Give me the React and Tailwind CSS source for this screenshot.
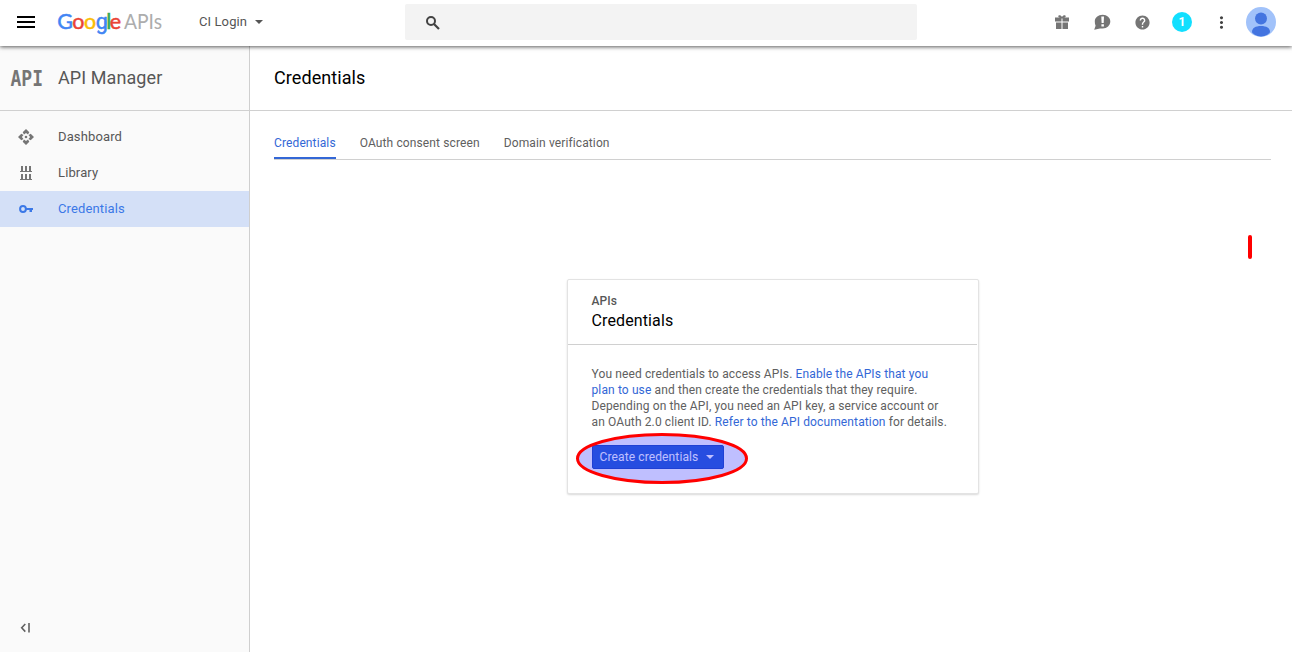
import React from "react";
import { MdHelp, MdMoreVert } from "react-icons/md";

function MenuIcon() {
  return (
    <svg width="18" height="12" viewBox="0 0 18 12" fill="#000">
      <path d="M0 0h18v2H0zM0 5h18v2H0zM0 10h18v2H0z" />
    </svg>
  );
}

function Logo() {
  return (
    <svg width="106" height="30" viewBox="0 0 106 30" className="overflow-visible font-['Lato',sans-serif]">
      <text y="22" fontSize="21.5" strokeWidth="0.5">
        <tspan x="-0.7" fill="#4285f4" stroke="#4285f4">G</tspan>
        <tspan x="14.3" fill="#ea4335" stroke="#ea4335">o</tspan>
        <tspan x="26" fill="#fbbc05" stroke="#fbbc05">o</tspan>
        <tspan x="37.7" fill="#4285f4" stroke="#4285f4" className="font-['Roboto',sans-serif]">g</tspan>
        <tspan x="48.3" fill="#34a853" stroke="#34a853">l</tspan>
        <tspan x="51.7" fill="#ea4335" stroke="#ea4335">e</tspan>
      </text>
      <text x="66" y="22" fontSize="20.500" fill="#adadad" textLength="38" lengthAdjust="spacingAndGlyphs">
        APIs
      </text>
    </svg>
  );
}

function SearchIcon() {
  return (
    <svg width="14" height="14" viewBox="0 0 14 14" fill="none" stroke="#424242">
      <circle cx="5" cy="5" r="4" strokeWidth="2" />
      <path d="M8 8l5 5" strokeWidth="2.200" />
    </svg>
  );
}

function Caret({ className }) {
  return (
    <svg width="8" height="4" viewBox="0 0 8 4" className={className} fill="currentColor">
      <path d="M0 0h8L4 4z" />
    </svg>
  );
}

function GiftIcon() {
  return (
    <svg width="14" height="14" viewBox="0 0 14 14" fill="#757575">
      <path d="M0 2.500h14v4H7.500v-3h-1v3H0zM1 7.500h5.500V14H1zM7.500 7.500H13V14H7.500z" />
      <path d="M7 3C5.500 3 3.300 2.500 3.300 1.400 3.300 0 5.800-.2 7 2 8.200-.2 10.700 0 10.700 1.400 10.700 2.500 8.500 3 7 3z" />
    </svg>
  );
}

function FeedbackIcon() {
  return (
    <svg width="17" height="16" viewBox="0 0 17 16">
      <path d="M8.700.8C13 .8 16.300 3.800 16.300 7.500s-3.300 7-7.600 7H6L.2 15.800l1.400-4C1 10.500.8 9 .8 7.500.8 3.800 4 .8 8.700.8z" fill="#757575" />
      <path d="M7.300 2.500h2.700L9.700 9H7.600zM7.400 10.300h2.500v2.200H7.400z" fill="#fff" />
    </svg>
  );
}

function Avatar() {
  return (
    <svg width="30" height="30" viewBox="0 0 30 30">
      <circle cx="15" cy="15" r="15" fill="#a1c2fa" />
      <circle cx="15" cy="11.500" r="6" fill="#4374e0" />
      <path d="M6 25c0-4 3.500-6 9-6s9 2 9 6c0 1-4 4.500-9 4.500S6 26 6 25z" fill="#4374e0" />
    </svg>
  );
}

function DashboardIcon() {
  return (
    <svg width="16" height="16" viewBox="0 0 16 16" fill="#757575">
      <path d="M8 0l3.300 3.300-1.300 2.200L8 3.900 6 5.500 4.700 3.300zM8 16l3.300-3.300-1.300-2.200-2 1.600-2-1.600-1.300 2.200zM0 8l3.300-3.300L5.500 6 3.900 8l1.600 2-2.200 1.300zM16 8l-3.300-3.300L10.500 6l1.600 2-1.600 2 2.200 1.300z" />
      <circle cx="8" cy="8" r="1.300" />
    </svg>
  );
}

function LibraryIcon() {
  return (
    <svg width="12" height="14" viewBox="0 0 12 14" fill="#757575">
      <path d="M1 0h2v5h2V0h2v5h2V0h2v5h1v1H0V5h1zM1 8h2v5h2V8h2v5h2V8h2v5h1v1H0v-1h1z" />
    </svg>
  );
}

function KeyIcon() {
  return (
    <svg width="14" height="8" viewBox="0 0 14 8">
      <circle cx="4" cy="4" r="2.900" fill="none" stroke="#3b78e7" strokeWidth="2" />
      <path d="M7 3h7v2h-1v2h-2.500V5H7z" fill="#3b78e7" />
    </svg>
  );
}

function CollapseIcon() {
  return (
    <svg width="10" height="10" viewBox="0 0 10 10" fill="none" stroke="#616161">
      <path d="M5.300 1L1.700 4.800l3.600 3.800" strokeWidth="1.600" />
      <path d="M9 0v9.500" strokeWidth="1.600" />
    </svg>
  );
}

function NavItem({ icon, label, active }) {
  return (
    <a
      className={
        active
          ? "flex h-9 items-center bg-[#d4e0f7] text-[13px] tracking-[0.13px] text-[#3b78e7]"
          : "flex h-9 items-center text-[13px] tracking-[0.13px] text-[#575757]"
      }
    >
      <span className="flex w-[52px] justify-center">{icon}</span>
      <span className="pl-1.5">{label}</span>
    </a>
  );
}

function Header() {
  return (
    <header className="relative z-10 flex h-[46px] shrink-0 items-center bg-white pb-0.5 shadow-[0_1px_4px_rgba(0,0,0,0.65)]">
      <div className="flex w-[405px] items-center">
        <span className="ml-[17px]">
          <MenuIcon />
        </span>
        <span className="ml-[23px]">
          <Logo />
        </span>
        <button className="ml-[35px] flex items-center text-[13px] tracking-[0.1px] text-[#555]">
          CI Login
          <Caret className="ml-2" />
        </button>
      </div>
      <div className="flex h-9 w-[512px] items-center rounded-[2px] bg-[#f3f3f3] pt-px pl-[21px]">
        <SearchIcon />
      </div>
      <div className="ml-auto flex items-center pr-4">
        <span className="flex w-10 justify-center">
          <GiftIcon />
        </span>
        <span className="flex w-10 justify-center">
          <FeedbackIcon />
        </span>
        <span className="flex w-10 justify-center">
          <MdHelp size={17} color="#757575" />
        </span>
        <span className="flex w-10 justify-center">
          <span className="flex size-5 items-center justify-center rounded-full bg-[#12dfff] text-[12px] font-bold text-white">
            1
          </span>
        </span>
        <span className="flex w-10 justify-center pr-px">
          <MdMoreVert size={19} color="#424242" />
        </span>
        <span className="ml-1">
          <Avatar />
        </span>
      </div>
    </header>
  );
}

function Sidebar() {
  return (
    <aside className="flex w-[250px] shrink-0 flex-col border-r border-[#cfcfcf] bg-[#fafafa]">
      <div className="flex h-[65px] items-center border-b border-[#d0d0d0] pl-2.5 text-lg text-[#575757]">
        <svg width="33" height="26" viewBox="0 0 33 26" className="overflow-visible font-['DejaVu_Sans_Mono',monospace]">
          <text x="0.5" y="21" fontSize="21.5" fontWeight="700" fill="#757575" textLength="32.5" lengthAdjust="spacingAndGlyphs">
            API
          </text>
        </svg>
        <span className="ml-[15px] tracking-[0.08px]">API Manager</span>
      </div>
      <nav className="pt-2">
        <NavItem icon={<DashboardIcon />} label="Dashboard" />
        <NavItem icon={<LibraryIcon />} label="Library" />
        <NavItem icon={<KeyIcon />} label="Credentials" active />
      </nav>
      <div className="mt-auto pb-[19px] pl-5">
        <CollapseIcon />
      </div>
    </aside>
  );
}

function Card() {
  return (
    <section className="h-[215px] w-[412px] rounded-[2px] border border-[#e3e3e3] bg-white shadow-[0_1px_2px_rgba(0,0,0,0.15)]">
      <div className="mr-px h-[65px] border-b border-[#d0d0d0] pt-[13px] pl-[23.5px]">
        <p className="text-xs leading-4 font-medium tracking-[0.12px] text-[#575757]">APIs</p>
        <h2 className="text-base leading-6 tracking-[0.12px] text-black">Credentials</h2>
      </div>
      <div className="pt-[21px] pl-[23.5px]">
        <p className="text-xs leading-4 tracking-[0.12px] whitespace-nowrap text-[#606060]">
          You need credentials to access APIs. <a className="text-[#3367d6]">Enable the APIs that you</a>
          <br />
          <a className="text-[#3367d6]">plan to use</a> and then create the credentials that they require.
          <br />
          Depending on the API, you need an API key, a service account or
          <br />
          an OAuth 2.0 client ID. <a className="text-[#3367d6]">Refer to the API documentation</a> for details.
        </p>
        <div className="relative mt-[15px] w-[132px]">
          <button className="flex h-6 w-[132px] items-center rounded-[2px] border border-[#2a56c6] bg-[#3367d6] pl-[7px] text-xs tracking-[0.12px] text-white">
            Create credentials
            <Caret className="ml-2" />
          </button>
          <svg width="172" height="52" viewBox="0 0 172 52" className="absolute -top-[13px] -left-4 max-w-none">
            <ellipse cx="86" cy="26.500" rx="84.500" ry="24" fill="#0000ff" fillOpacity="0.25" stroke="#ff0000" strokeWidth="3" />
          </svg>
        </div>
      </div>
    </section>
  );
}

export default function App() {
  return (
    <div className="flex h-[652px] w-[1292px] flex-col overflow-hidden bg-white font-['Roboto',sans-serif]">
      <Header />
      <div className="flex min-h-0 flex-1">
        <Sidebar />
        <main className="relative min-w-0 flex-1">
          <h1 className="flex h-[65px] items-center border-b border-[#d0d0d0] pl-6 text-lg tracking-[0.08px] text-black">Credentials</h1>
          <div className="mr-[21px] ml-6 flex h-[49px] items-end gap-6 border-b border-[#d0d0d0] text-xs tracking-[0.12px] text-[#606060]">
            <a className="border-b-2 border-[#3367d6] pb-1.5 text-[#3367d6]">Credentials</a>
            <a className="pb-2">OAuth consent screen</a>
            <a className="pb-2">Domain verification</a>
          </div>
          <div className="mt-[119px] ml-[317px]">
            <Card />
          </div>
          <span className="absolute top-[189px] left-[998px] h-6 w-1 rounded-full bg-[#ff0000]" />
        </main>
      </div>
    </div>
  );
}
